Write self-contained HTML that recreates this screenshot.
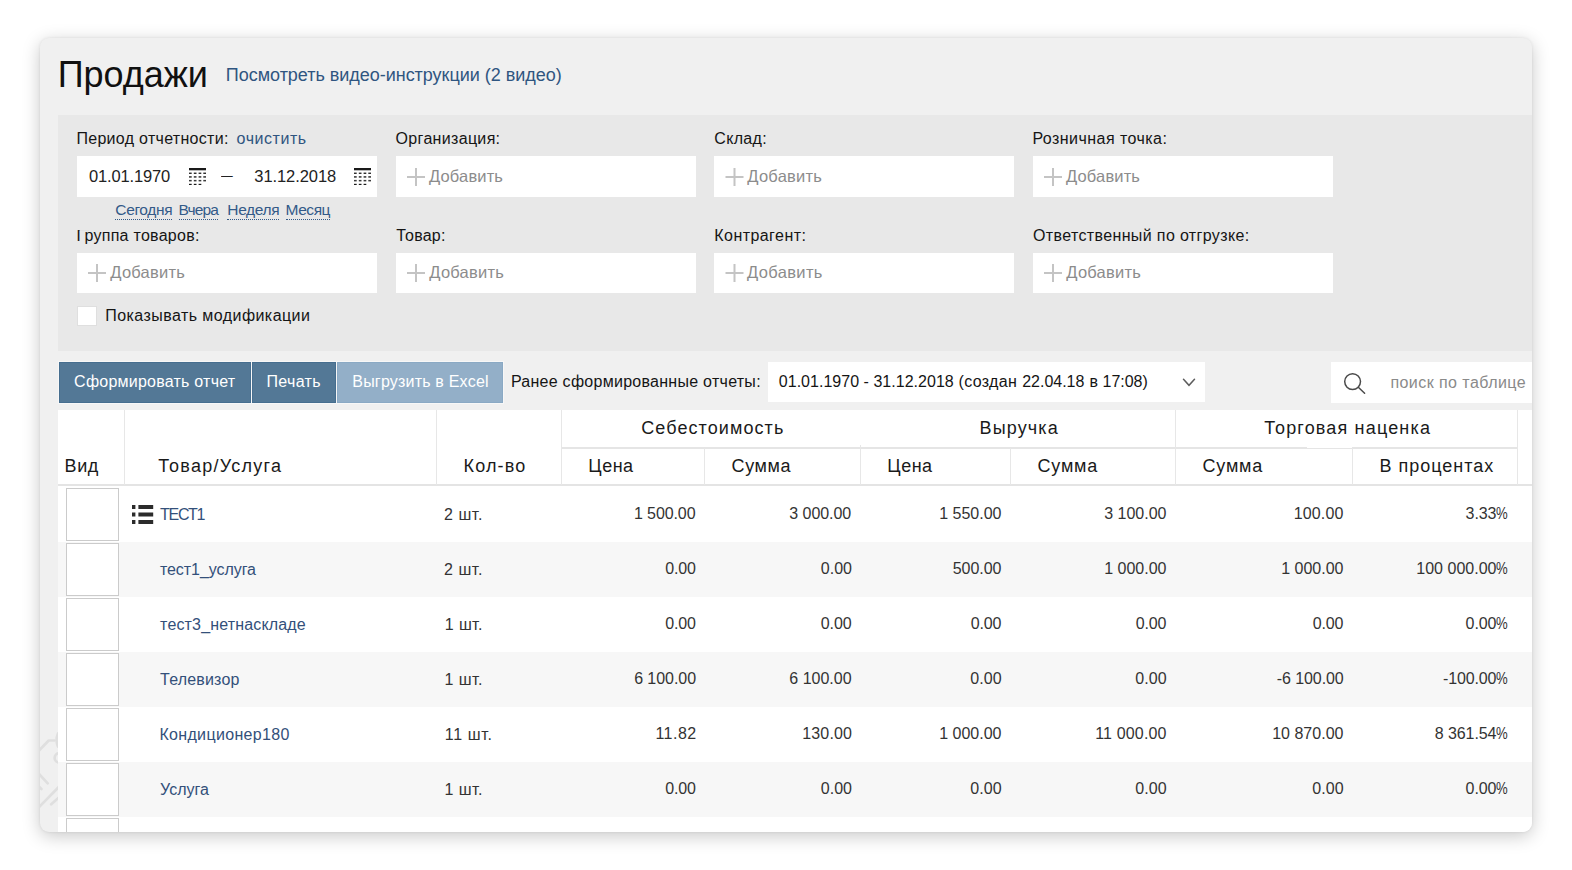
<!DOCTYPE html>
<html lang="ru"><head><meta charset="utf-8"><title>Продажи</title>
<style>
html,body{margin:0;padding:0;}
body{width:1572px;height:870px;overflow:hidden;background:#fff;position:relative;font-family:"Liberation Sans",sans-serif;}
.card{position:absolute;left:40px;top:38px;width:1492px;height:794px;background:#f0f0f0;border-radius:9px;box-shadow:0 4px 18px rgba(0,0,0,.22),0 0 3px rgba(0,0,0,.08);}
.clip{position:absolute;left:40px;top:38px;width:1492px;height:794px;border-radius:9px;overflow:hidden;}
.abs{position:absolute;}
.panel{position:absolute;left:58px;top:115px;width:1474px;height:236px;background:#e8e8e8;}
.box{position:absolute;background:#fff;}
.t{position:absolute;white-space:nowrap;line-height:1;font-family:"Liberation Sans",sans-serif;}
.btn{position:absolute;top:362px;height:41px;background:#537896;box-shadow:0 0 0 1px #f7f7f7,inset 0 0 0 1px #466e8f;}
.vl{position:absolute;width:1px;background:#e7e7e7;}
.hl{position:absolute;height:1px;background:#e3e3e3;}
.img{position:absolute;left:66px;width:51px;height:51px;border:1px solid #cbcbcb;background:#fff;}
.row{position:absolute;left:58px;width:1474px;height:55px;}
svg{position:absolute;overflow:visible;}
.pc{display:inline-block;width:11.6px;transform:scaleX(.82);transform-origin:0 50%;letter-spacing:0;}
</style></head><body>
<div class="card"></div>
<div class="clip" style="left:0;top:0;width:1572px;height:870px;border-radius:0;clip-path:inset(38px 40px 38px 40px round 9px);">
<div class="panel"></div>
<!-- filter boxes row 1 -->
<div class="box" style="left:77px;top:156px;width:300px;height:41px;"></div>
<div class="box" style="left:396px;top:156px;width:300px;height:41px;"></div>
<div class="box" style="left:714.3px;top:156px;width:300px;height:41px;"></div>
<div class="box" style="left:1033px;top:156px;width:300px;height:41px;"></div>
<!-- row 2 -->
<div class="box" style="left:77px;top:253px;width:300px;height:40px;"></div>
<div class="box" style="left:396px;top:253px;width:300px;height:40px;"></div>
<div class="box" style="left:714.3px;top:253px;width:300px;height:40px;"></div>
<div class="box" style="left:1033px;top:253px;width:300px;height:40px;"></div>
<!-- checkbox -->
<div class="box" style="left:77px;top:306px;width:18px;height:18px;border:1px solid #dfdfdf;"></div>
<!-- buttons -->
<div class="btn" style="left:59px;width:192px;"></div>
<div class="btn" style="left:252px;width:84px;"></div>
<div class="btn" style="left:337px;width:166px;background:#93afc8;box-shadow:0 0 0 1px #f7f7f7,inset 0 0 0 1px #8aa9c4;"></div>
<div class="box" style="left:768px;top:362px;width:437px;height:40px;"></div>
<div class="box" style="left:1331px;top:362px;width:201px;height:41px;"></div>
<!-- table -->
<div class="box" style="left:58px;top:410px;width:1474px;height:422px;"></div>
<div class="row" style="top:542px;background:#f7f7f7;"></div>
<div class="row" style="top:652px;background:#f7f7f7;"></div>
<div class="row" style="top:762px;background:#f7f7f7;"></div>
<div class="hl" style="left:58px;top:484px;width:1474px;height:2px;background:#e4e4e4;"></div>
<div class="hl" style="left:562px;top:447px;width:956px;height:2px;background:#e5e5e5;"></div>
<div class="hl" style="left:1307px;top:447px;width:45px;height:1px;background:#fff;"></div>
<div class="vl" style="left:124px;top:410px;height:75px;"></div>
<div class="vl" style="left:436px;top:410px;height:75px;"></div>
<div class="vl" style="left:561px;top:410px;height:75px;"></div>
<div class="vl" style="left:704px;top:448px;height:37px;"></div>
<div class="vl" style="left:860px;top:445px;height:40px;"></div>
<div class="vl" style="left:1010px;top:448px;height:37px;"></div>
<div class="vl" style="left:1175px;top:410px;height:75px;"></div>
<div class="vl" style="left:1352px;top:448px;height:37px;"></div>
<div class="vl" style="left:1517px;top:410px;height:75px;"></div>
<!-- image placeholders -->
<div class="img" style="top:488px;"></div>
<div class="img" style="top:543px;"></div>
<div class="img" style="top:598px;"></div>
<div class="img" style="top:653px;"></div>
<div class="img" style="top:708px;"></div>
<div class="img" style="top:763px;"></div>
<div class="img" style="top:818px;"></div>
</div>
<!-- icons -->
<svg id="icons" width="1572" height="870" style="left:0;top:0;pointer-events:none;">

<g fill="#1a1a1a" transform="translate(189,168)">
<rect x="0" y="0" width="17" height="2.3"/>
<rect x="0" y="4.6" width="2.7" height="1.3"/><rect x="4.8" y="4.6" width="2.7" height="1.3"/><rect x="9.6" y="4.6" width="2.7" height="1.3"/><rect x="14.3" y="4.6" width="2.7" height="1.3"/>
<g opacity=".75"><rect x="0" y="8" width="2.7" height="1.8"/><rect x="4.8" y="8" width="2.7" height="1.8"/><rect x="9.6" y="8" width="2.7" height="1.8"/><rect x="14.3" y="8" width="2.7" height="1.8"/></g>
<g opacity=".85"><rect x="0" y="11.9" width="2.7" height="1.5"/><rect x="4.8" y="11.9" width="2.7" height="1.5"/><rect x="9.6" y="11.9" width="2.7" height="1.5"/><rect x="14.3" y="11.9" width="2.7" height="1.5"/></g>
<rect x="0" y="15.8" width="2.7" height="1.2"/><rect x="4.8" y="15.8" width="2.7" height="1.2"/><rect x="9.6" y="15.8" width="2.7" height="1.2"/>
</g>
<g fill="#1a1a1a" transform="translate(354,168)">
<rect x="0" y="0" width="17" height="2.3"/>
<rect x="0" y="4.6" width="2.7" height="1.3"/><rect x="4.8" y="4.6" width="2.7" height="1.3"/><rect x="9.6" y="4.6" width="2.7" height="1.3"/><rect x="14.3" y="4.6" width="2.7" height="1.3"/>
<g opacity=".75"><rect x="0" y="8" width="2.7" height="1.8"/><rect x="4.8" y="8" width="2.7" height="1.8"/><rect x="9.6" y="8" width="2.7" height="1.8"/><rect x="14.3" y="8" width="2.7" height="1.8"/></g>
<g opacity=".85"><rect x="0" y="11.9" width="2.7" height="1.5"/><rect x="4.8" y="11.9" width="2.7" height="1.5"/><rect x="9.6" y="11.9" width="2.7" height="1.5"/><rect x="14.3" y="11.9" width="2.7" height="1.5"/></g>
<rect x="0" y="15.8" width="2.7" height="1.2"/><rect x="4.8" y="15.8" width="2.7" height="1.2"/><rect x="9.6" y="15.8" width="2.7" height="1.2"/>
</g>
<g fill="#c4c4c4" transform="translate(407,168)"><rect x="0" y="8" width="18" height="2"/><rect x="8" y="0" width="2" height="18"/></g>
<g fill="#c4c4c4" transform="translate(725.5,168)"><rect x="0" y="8" width="18" height="2"/><rect x="8" y="0" width="2" height="18"/></g>
<g fill="#c4c4c4" transform="translate(1044,168)"><rect x="0" y="8" width="18" height="2"/><rect x="8" y="0" width="2" height="18"/></g>
<g fill="#c4c4c4" transform="translate(88,264)"><rect x="0" y="8" width="18" height="2"/><rect x="8" y="0" width="2" height="18"/></g>
<g fill="#c4c4c4" transform="translate(407,264)"><rect x="0" y="8" width="18" height="2"/><rect x="8" y="0" width="2" height="18"/></g>
<g fill="#c4c4c4" transform="translate(725.5,264)"><rect x="0" y="8" width="18" height="2"/><rect x="8" y="0" width="2" height="18"/></g>
<g fill="#c4c4c4" transform="translate(1044,264)"><rect x="0" y="8" width="18" height="2"/><rect x="8" y="0" width="2" height="18"/></g>
<!-- chevron -->
<path d="M1183.5 379.2 L1189 385.3 L1194.5 379.2" fill="none" stroke="#5c5c5c" stroke-width="1.5" stroke-linecap="round"/>
<!-- search -->
<circle cx="1352.6" cy="381.6" r="7.9" fill="none" stroke="#4a4a4a" stroke-width="1.5"/>
<path d="M1358.3 387.3 L1364.6 393.3" fill="none" stroke="#4a4a4a" stroke-width="1.5" stroke-linecap="round"/>
<!-- list icon -->
<g fill="#2b2b2b">
<rect x="132" y="505" width="3.4" height="4"/><rect x="138.4" y="505" width="14.8" height="4"/>
<rect x="132" y="512.5" width="3.4" height="4"/><rect x="138.4" y="512.5" width="14.8" height="4"/>
<rect x="132" y="520" width="3.4" height="4"/><rect x="138.4" y="520" width="14.8" height="4"/>
</g>
<!-- watermark tag -->
<clipPath id="wmclip"><rect x="40" y="700" width="18" height="125"/></clipPath>
<g fill="none" stroke="#dfdfdf" stroke-width="2.7" stroke-linecap="round" stroke-linejoin="round" clip-path="url(#wmclip)">
<path d="M39 750.5 L48.7 740.5 L54.5 740.5"/>
<path d="M58 733.5 Q55.2 740 58 746.5"/>
<circle cx="59.2" cy="757.9" r="4.6"/>
<path d="M39 774 L47.7 783.3"/>
<path d="M39 786.6 L41.4 789"/>
<path d="M39 807.2 L59 786.7"/>
<path d="M51.2 804.3 L59 797.4"/>
</g>

</svg>

<span class="t" id="t0" style="top:57.03px;font-size:36px;color:#111;letter-spacing:-0.045px;left:57.72px;">Продажи</span>
<span class="t" id="t1" style="top:66.46px;font-size:18px;color:#2f5580;letter-spacing:-0.029px;left:225.85px;">Посмотреть видео-инструкции (2 видео)</span>
<span class="t" id="t2" style="top:131.46px;font-size:16px;color:#151515;letter-spacing:0.298px;left:76.41px;">Период отчетности:</span>
<span class="t" id="t3" style="top:131.46px;font-size:16px;color:#2f5580;letter-spacing:0.547px;left:236.60px;">очистить</span>
<span class="t" id="t4" style="top:131.46px;font-size:16px;color:#151515;letter-spacing:0.320px;left:395.60px;">Организация:</span>
<span class="t" id="t5" style="top:131.46px;font-size:16px;color:#151515;letter-spacing:0.306px;left:714.30px;">Склад:</span>
<span class="t" id="t6" style="top:131.46px;font-size:16px;color:#151515;letter-spacing:0.451px;left:1032.41px;">Розничная точка:</span>
<span class="t" id="t7" style="top:168.33px;font-size:16.5px;color:#222;letter-spacing:-0.165px;left:89.10px;">01.01.1970</span>
<span class="t" id="t8" style="top:168.60px;font-size:13px;color:#222;letter-spacing:0.720px;left:220.98px;transform:scaleX(1.62);transform-origin:0 50%;">–</span>
<span class="t" id="t9" style="top:168.33px;font-size:16.5px;color:#222;letter-spacing:-0.075px;left:254.29px;">31.12.2018</span>
<span class="t" id="t10" style="top:201.88px;font-size:15.5px;color:#335a88;letter-spacing:-0.361px;left:115.31px;border-bottom:1px dotted #335a88;padding-bottom:2px;">Сегодня</span>
<span class="t" id="t11" style="top:201.88px;font-size:15.5px;color:#335a88;letter-spacing:-0.881px;left:178.56px;border-bottom:1px dotted #335a88;padding-bottom:2px;">Вчера</span>
<span class="t" id="t12" style="top:201.88px;font-size:15.5px;color:#335a88;letter-spacing:-0.364px;left:227.31px;border-bottom:1px dotted #335a88;padding-bottom:2px;">Неделя</span>
<span class="t" id="t13" style="top:201.88px;font-size:15.5px;color:#335a88;letter-spacing:-0.449px;left:285.56px;border-bottom:1px dotted #335a88;padding-bottom:2px;">Месяц</span>
<span class="t" id="t14" style="top:228.46px;font-size:16px;color:#151515;letter-spacing:0.272px;left:76.41px;">Группа товаров:</span>
<span class="t" id="t15" style="top:228.46px;font-size:16px;color:#151515;letter-spacing:0.221px;left:396.30px;">Товар:</span>
<span class="t" id="t16" style="top:228.46px;font-size:16px;color:#151515;letter-spacing:0.441px;left:714.30px;">Контрагент:</span>
<span class="t" id="t17" style="top:228.46px;font-size:16px;color:#151515;letter-spacing:0.367px;left:1033.00px;">Ответственный по отгрузке:</span>
<span class="t" id="t18" style="top:168.33px;font-size:16.5px;color:#8c8c8c;letter-spacing:0.143px;left:429.06px;">Добавить</span>
<span class="t" id="t19" style="top:168.33px;font-size:16.5px;color:#8c8c8c;letter-spacing:0.243px;left:747.35px;">Добавить</span>
<span class="t" id="t20" style="top:168.33px;font-size:16.5px;color:#8c8c8c;letter-spacing:0.143px;left:1066.06px;">Добавить</span>
<span class="t" id="t21" style="top:263.73px;font-size:16.5px;color:#8c8c8c;letter-spacing:0.243px;left:110.29px;">Добавить</span>
<span class="t" id="t22" style="top:263.73px;font-size:16.5px;color:#8c8c8c;letter-spacing:0.243px;left:429.29px;">Добавить</span>
<span class="t" id="t23" style="top:263.73px;font-size:16.5px;color:#8c8c8c;letter-spacing:0.343px;left:747.09px;">Добавить</span>
<span class="t" id="t24" style="top:263.73px;font-size:16.5px;color:#8c8c8c;letter-spacing:0.243px;left:1066.29px;">Добавить</span>
<span class="t" id="t25" style="top:307.96px;font-size:16px;color:#151515;letter-spacing:0.432px;left:105.30px;">Показывать модификации</span>
<span class="t" id="t26" style="top:373.76px;font-size:16px;color:#fff;letter-spacing:0.231px;left:74.11px;">Сформировать отчет</span>
<span class="t" id="t27" style="top:373.76px;font-size:16px;color:#fff;letter-spacing:0.312px;left:266.55px;">Печать</span>
<span class="t" id="t28" style="top:373.76px;font-size:16px;color:#fff;letter-spacing:0.193px;left:352.30px;">Выгрузить в Excel</span>
<span class="t" id="t29" style="top:373.76px;font-size:16px;color:#151515;letter-spacing:0.271px;left:510.88px;">Ранее сформированные отчеты:</span>
<span class="t" id="t30" style="top:373.76px;font-size:16px;color:#151515;letter-spacing:0.025px;left:778.79px;">01.01.1970 - 31.12.2018 </span>
<span class="t" id="t31" style="top:373.76px;font-size:16px;color:#151515;letter-spacing:0.350px;left:958.50px;">(создан </span>
<span class="t" id="t32" style="top:373.76px;font-size:16px;color:#151515;letter-spacing:-0.014px;left:1022.20px;">22.04.18 </span>
<span class="t" id="t33" style="top:373.76px;font-size:16px;color:#151515;letter-spacing:-0.220px;left:1089.60px;">в </span>
<span class="t" id="t34" style="top:373.76px;font-size:16px;color:#151515;letter-spacing:-0.039px;left:1102.60px;">17:08)</span>
<span class="t" id="t35" style="top:374.76px;font-size:16px;color:#8a8a8a;letter-spacing:0.445px;left:1390.40px;">поиск по таблице</span>
<span class="t" id="t36" style="top:456.76px;font-size:18px;color:#1a1a1a;letter-spacing:0.591px;left:64.55px;">Вид</span>
<span class="t" id="t37" style="top:456.76px;font-size:18px;color:#1a1a1a;letter-spacing:1.258px;left:158.20px;">Товар/Услуга</span>
<span class="t" id="t38" style="top:456.76px;font-size:18px;color:#1a1a1a;letter-spacing:1.154px;left:463.55px;">Кол-во</span>
<span class="t" id="t39" style="top:419.06px;font-size:18px;color:#1a1a1a;letter-spacing:1.083px;left:641.25px;">Себестоимость</span>
<span class="t" id="t40" style="top:419.06px;font-size:18px;color:#1a1a1a;letter-spacing:1.135px;left:979.55px;">Выручка</span>
<span class="t" id="t41" style="top:419.06px;font-size:18px;color:#1a1a1a;letter-spacing:1.169px;left:1264.20px;">Торговая наценка</span>
<span class="t" id="t42" style="top:456.76px;font-size:18px;color:#1a1a1a;letter-spacing:0.486px;left:588.36px;">Цена</span>
<span class="t" id="t43" style="top:456.76px;font-size:18px;color:#1a1a1a;letter-spacing:0.624px;left:731.53px;">Сумма</span>
<span class="t" id="t44" style="top:456.76px;font-size:18px;color:#1a1a1a;letter-spacing:0.486px;left:887.36px;">Цена</span>
<span class="t" id="t45" style="top:456.76px;font-size:18px;color:#1a1a1a;letter-spacing:0.804px;left:1037.53px;">Сумма</span>
<span class="t" id="t46" style="top:456.76px;font-size:18px;color:#1a1a1a;letter-spacing:0.804px;left:1202.53px;">Сумма</span>
<span class="t" id="t47" style="top:456.76px;font-size:18px;color:#1a1a1a;letter-spacing:0.987px;left:1379.55px;">В процентах</span>
<span class="t" id="t48" style="top:507.46px;font-size:16px;color:#33507a;letter-spacing:-1.140px;left:159.94px;">ТЕСТ1</span>
<span class="t" id="t49" style="top:507.46px;font-size:16px;color:#333;letter-spacing:0.598px;left:443.90px;">2 шт.</span>
<span class="t" id="t50" style="top:506.46px;font-size:16px;color:#333;letter-spacing:-0.101px;right:876.55px;">1 500.00</span>
<span class="t" id="t51" style="top:506.46px;font-size:16px;color:#333;letter-spacing:-0.046px;right:720.77px;">3 000.00</span>
<span class="t" id="t52" style="top:506.46px;font-size:16px;color:#333;letter-spacing:0.009px;right:570.53px;">1 550.00</span>
<span class="t" id="t53" style="top:506.46px;font-size:16px;color:#333;letter-spacing:0.009px;right:405.53px;">3 100.00</span>
<span class="t" id="t54" style="top:506.46px;font-size:16px;color:#333;letter-spacing:0.105px;right:228.58px;">100.00</span>
<span class="t" id="t55" style="top:506.46px;font-size:16px;color:#333;letter-spacing:-0.083px;right:64.04px;">3.33<span class="pc">%</span></span>
<span class="t" id="t56" style="top:562.46px;font-size:16px;color:#33507a;letter-spacing:-0.059px;left:159.94px;">тест1_услуга</span>
<span class="t" id="t57" style="top:562.46px;font-size:16px;color:#333;letter-spacing:0.598px;left:443.90px;">2 шт.</span>
<span class="t" id="t58" style="top:561.46px;font-size:16px;color:#333;letter-spacing:-0.109px;right:876.14px;">0.00</span>
<span class="t" id="t59" style="top:561.46px;font-size:16px;color:#333;letter-spacing:0.020px;right:720.00px;">0.00</span>
<span class="t" id="t60" style="top:561.46px;font-size:16px;color:#333;letter-spacing:-0.038px;right:570.58px;">500.00</span>
<span class="t" id="t61" style="top:561.46px;font-size:16px;color:#333;letter-spacing:0.009px;right:405.53px;">1 000.00</span>
<span class="t" id="t62" style="top:561.46px;font-size:16px;color:#333;letter-spacing:0.009px;right:228.53px;">1 000.00</span>
<span class="t" id="t63" style="top:561.46px;font-size:16px;color:#333;letter-spacing:0.009px;right:63.95px;">100 000.00<span class="pc">%</span></span>
<span class="t" id="t64" style="top:617.46px;font-size:16px;color:#33507a;letter-spacing:0.157px;left:160.08px;">тест3_нетнаскладе</span>
<span class="t" id="t65" style="top:617.46px;font-size:16px;color:#333;letter-spacing:0.373px;left:444.80px;">1 шт.</span>
<span class="t" id="t66" style="top:616.46px;font-size:16px;color:#333;letter-spacing:-0.109px;right:876.14px;">0.00</span>
<span class="t" id="t67" style="top:616.46px;font-size:16px;color:#333;letter-spacing:-0.109px;right:720.48px;">0.00</span>
<span class="t" id="t68" style="top:616.46px;font-size:16px;color:#333;letter-spacing:-0.109px;right:570.65px;">0.00</span>
<span class="t" id="t69" style="top:616.46px;font-size:16px;color:#333;letter-spacing:-0.109px;right:405.65px;">0.00</span>
<span class="t" id="t70" style="top:616.46px;font-size:16px;color:#333;letter-spacing:-0.109px;right:228.65px;">0.00</span>
<span class="t" id="t71" style="top:616.46px;font-size:16px;color:#333;letter-spacing:-0.083px;right:64.04px;">0.00<span class="pc">%</span></span>
<span class="t" id="t72" style="top:672.46px;font-size:16px;color:#33507a;letter-spacing:0.186px;left:160.08px;">Телевизор</span>
<span class="t" id="t73" style="top:672.46px;font-size:16px;color:#333;letter-spacing:0.408px;left:444.52px;">1 шт.</span>
<span class="t" id="t74" style="top:671.46px;font-size:16px;color:#333;letter-spacing:-0.056px;right:876.02px;">6 100.00</span>
<span class="t" id="t75" style="top:671.46px;font-size:16px;color:#333;letter-spacing:0.009px;right:720.36px;">6 100.00</span>
<span class="t" id="t76" style="top:671.46px;font-size:16px;color:#333;letter-spacing:0.043px;right:570.36px;">0.00</span>
<span class="t" id="t77" style="top:671.46px;font-size:16px;color:#333;letter-spacing:0.043px;right:405.36px;">0.00</span>
<span class="t" id="t78" style="top:671.46px;font-size:16px;color:#333;letter-spacing:-0.083px;right:228.34px;">-6 100.00</span>
<span class="t" id="t79" style="top:671.46px;font-size:16px;color:#333;letter-spacing:-0.157px;right:64.26px;">-100.00<span class="pc">%</span></span>
<span class="t" id="t80" style="top:727.46px;font-size:16px;color:#33507a;letter-spacing:0.339px;left:159.38px;">Кондиционер180</span>
<span class="t" id="t81" style="top:727.46px;font-size:16px;color:#333;letter-spacing:0.638px;left:444.80px;">11 шт.</span>
<span class="t" id="t82" style="top:726.46px;font-size:16px;color:#333;letter-spacing:0.488px;right:875.33px;">11.82</span>
<span class="t" id="t83" style="top:726.46px;font-size:16px;color:#333;letter-spacing:0.170px;right:719.85px;">130.00</span>
<span class="t" id="t84" style="top:726.46px;font-size:16px;color:#333;letter-spacing:0.009px;right:570.53px;">1 000.00</span>
<span class="t" id="t85" style="top:726.46px;font-size:16px;color:#333;letter-spacing:0.164px;right:405.38px;">11 000.00</span>
<span class="t" id="t86" style="top:726.46px;font-size:16px;color:#333;letter-spacing:0.015px;right:228.52px;">10 870.00</span>
<span class="t" id="t87" style="top:726.46px;font-size:16px;color:#333;letter-spacing:-0.089px;right:64.05px;">8 361.54<span class="pc">%</span></span>
<span class="t" id="t88" style="top:782.46px;font-size:16px;color:#33507a;letter-spacing:0.017px;left:160.08px;">Услуга</span>
<span class="t" id="t89" style="top:782.46px;font-size:16px;color:#333;letter-spacing:0.408px;left:444.52px;">1 шт.</span>
<span class="t" id="t90" style="top:781.46px;font-size:16px;color:#333;letter-spacing:-0.109px;right:876.14px;">0.00</span>
<span class="t" id="t91" style="top:781.46px;font-size:16px;color:#333;letter-spacing:0.020px;right:720.00px;">0.00</span>
<span class="t" id="t92" style="top:781.46px;font-size:16px;color:#333;letter-spacing:0.043px;right:570.36px;">0.00</span>
<span class="t" id="t93" style="top:781.46px;font-size:16px;color:#333;letter-spacing:0.043px;right:405.36px;">0.00</span>
<span class="t" id="t94" style="top:781.46px;font-size:16px;color:#333;letter-spacing:0.043px;right:228.36px;">0.00</span>
<span class="t" id="t95" style="top:781.46px;font-size:16px;color:#333;letter-spacing:-0.083px;right:64.04px;">0.00<span class="pc">%</span></span>
<div class="abs" style="left:76px;top:224px;width:130px;height:6px;background:#e8e8e8;"></div><div class="abs" style="left:80px;top:230px;width:9px;height:1px;background:#e2e2e2;"></div>
</body></html>
